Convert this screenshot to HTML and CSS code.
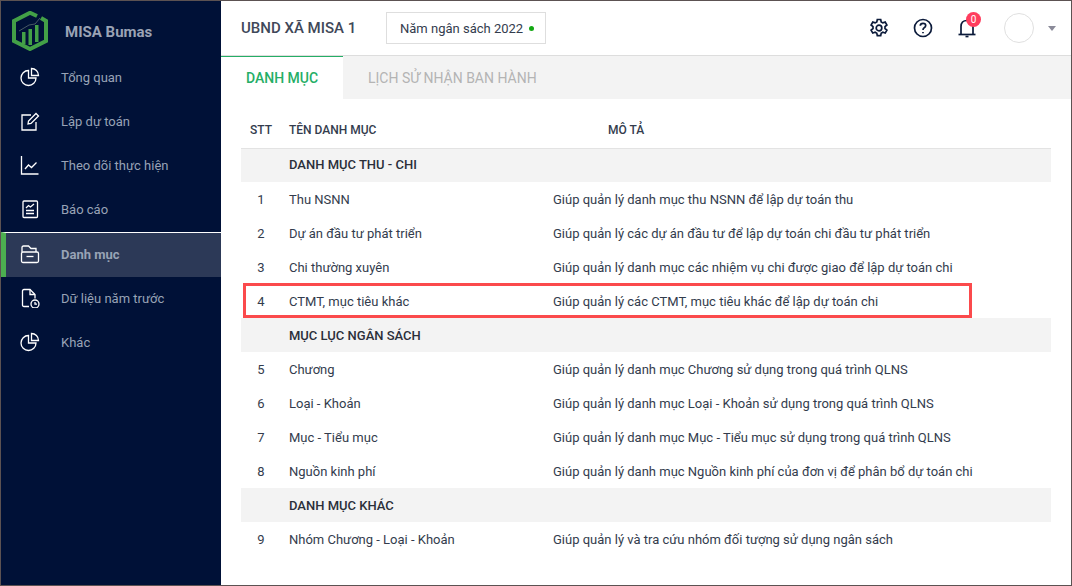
FILE: index.html
```html
<!DOCTYPE html>
<html lang="vi">
<head>
    <meta charset="UTF-8">
    <meta name="viewport" content="width=device-width, initial-scale=1.0">
    <title>MISA Bumas</title>
    <link rel="stylesheet" href="styles.css">
</head>
<body>
    <div class="window">
        <aside class="sidebar">
            <div class="brand">
                <svg class="logo" width="36" height="40" viewBox="0 0 36 40" fill="none">
                    <path d="M25 5 18 1.800 2 10V30L18 38 34 30V10L29 7" stroke="#43a047" stroke-width="4"/>
                    <path d="M10 21h3.500v12H10zM16.500 18H20v16h-3.500zM23 14h3.500v17H23z" fill="#43a047"/>
                    <path d="M7 20 17 14l6-1 5-6" stroke="#5a6b70" stroke-width="0.800"/>
                </svg>
                <span class="brand-name">MISA Bumas</span>
            </div>
            <nav class="menu">
                <a class="menu-item">
                    <svg class="menu-icon" viewBox="0 0 20 20"><path d="M8.500 3.500a7.500 7.500 0 1 0 7.500 7.500H8.500z"/><path d="M11.500 1.500a7 7 0 0 1 7 7h-7z"/></svg>
                    Tổng quan
                </a>
                <a class="menu-item">
                    <svg class="menu-icon" viewBox="0 0 20 20"><path d="M11 4H2v15h14v-8"/><path d="M8 13l.5-3L16 2.500 18.500 5 11 12.500z"/></svg>
                    Lập dự toán
                </a>
                <a class="menu-item">
                    <svg class="menu-icon" viewBox="0 0 20 20"><path d="M1.500 1v18h17"/><path d="M5 14l3.500-4 3 2.500 5-5"/></svg>
                    Theo dõi thực hiện
                </a>
                <a class="menu-item">
                    <svg class="menu-icon" viewBox="0 0 20 20"><rect x="3" y="2" width="14.500" height="16.500" rx="1"/><path d="M6 9l2.500-2.500 2 1.500 3.500-3M6 11.500h8M6 14.500h8"/></svg>
                    Báo cáo
                </a>
                <a class="menu-item active">
                    <svg class="menu-icon" viewBox="0 0 20 20"><path d="M2 8V3.500Q2 2 3.500 2h5L11 4.500h5V8"/><rect x="1.500" y="8" width="17" height="10.500" rx="1.500"/><path d="M6.500 12.500h7"/></svg>
                    Danh mục
                </a>
                <a class="menu-item">
                    <svg class="menu-icon" viewBox="0 0 20 20"><path d="M9 18.500H4Q2.500 18.500 2.500 17V3Q2.500 1.500 4 1.500h6l5 5v4"/><path d="M10 1.500v5h5"/><circle cx="15" cy="16" r="4"/><path d="M15 14v2.200h2"/></svg>
                    Dữ liệu năm trước
                </a>
                <a class="menu-item">
                    <svg class="menu-icon" viewBox="0 0 20 20"><path d="M8.500 3.500a7.500 7.500 0 1 0 7.500 7.500H8.500z"/><path d="M11.500 1.500a7 7 0 0 1 7 7h-7z"/></svg>
                    Khác
                </a>
            </nav>
        </aside>

        <main class="main">
            <header class="topbar">
                <div class="org-name">UBND XÃ MISA 1</div>
                <div class="budget-year">Năm ngân sách 2022<span class="dot"></span></div>
                <div class="topbar-right">
                    <svg class="top-icon" viewBox="0 0 20 20"><path d="M8.300 1.500h3.400l.5 2.500 1.600.9 2.400-.8 1.700 2.900-1.900 1.700v1.800l1.900 1.700-1.700 2.900-2.400-.8-1.600.9-.5 2.500H8.300l-.5-2.500-1.600-.9-2.400.8-1.700-2.900 1.900-1.700V8.700L2.100 7l1.700-2.900 2.400.8 1.600-.9z"/><circle cx="10" cy="10" r="2.800"/></svg>
                    <svg class="top-icon" viewBox="0 0 20 20"><circle cx="10" cy="10" r="8.500"/><path d="M7.300 7.800Q7.300 5.300 10 5.300T12.700 7.600Q12.700 9 11.200 9.800 10 10.500 10 12"/><path d="M10 14v1.300"/></svg>
                    <div class="bell">
                        <svg class="top-icon" viewBox="0 0 20 20"><path d="M1.500 16.500h17"/><path d="M4 16.500V8.500Q4 2.500 10 2.500T16 8.500v8"/><path d="M8.500 18.500h3"/></svg>
                        <span class="badge">0</span>
                    </div>
                    <div class="avatar"></div>
                    <span class="caret"></span>
                </div>
            </header>

            <div class="tabs">
                <div class="tab active">DANH MỤC</div>
                <div class="tab">LỊCH SỬ NHẬN BAN HÀNH</div>
            </div>

            <div class="content">
                <table class="list">
                    <thead>
                        <tr>
                            <th class="col-stt">STT</th>
                            <th class="col-name">TÊN DANH MỤC</th>
                            <th class="col-desc">MÔ TẢ</th>
                        </tr>
                    </thead>
                    <tbody>
                        <tr class="group first"><td></td><td colspan="2">DANH MỤC THU - CHI</td></tr>
                        <tr><td class="num">1</td><td>Thu NSNN</td><td>Giúp quản lý danh mục thu NSNN để lập dự toán thu</td></tr>
                        <tr><td class="num">2</td><td>Dự án đầu tư phát triển</td><td>Giúp quản lý các dự án đầu tư để lập dự toán chi đầu tư phát triển</td></tr>
                        <tr><td class="num">3</td><td>Chi thường xuyên</td><td>Giúp quản lý danh mục các nhiệm vụ chi được giao để lập dự toán chi</td></tr>
                        <tr><td class="num">4</td><td>CTMT, mục tiêu khác</td><td>Giúp quản lý các CTMT, mục tiêu khác để lập dự toán chi</td></tr>
                        <tr class="group"><td></td><td colspan="2">MỤC LỤC NGÂN SÁCH</td></tr>
                        <tr><td class="num">5</td><td>Chương</td><td>Giúp quản lý danh mục Chương sử dụng trong quá trình QLNS</td></tr>
                        <tr><td class="num">6</td><td>Loại - Khoản</td><td>Giúp quản lý danh mục Loại - Khoản sử dụng trong quá trình QLNS</td></tr>
                        <tr><td class="num">7</td><td>Mục - Tiểu mục</td><td>Giúp quản lý danh mục Mục - Tiểu mục sử dụng trong quá trình QLNS</td></tr>
                        <tr><td class="num">8</td><td>Nguồn kinh phí</td><td>Giúp quản lý danh mục Nguồn kinh phí của đơn vị để phân bổ dự toán chi</td></tr>
                        <tr class="group"><td></td><td colspan="2">DANH MỤC KHÁC</td></tr>
                        <tr><td class="num">9</td><td>Nhóm Chương - Loại - Khoản</td><td>Giúp quản lý và tra cứu nhóm đối tượng sử dụng ngân sách</td></tr>
                    </tbody>
                </table>
                <div class="highlight"></div>
            </div>
        </main>
    </div>
</body>
</html>
```

FILE: styles.css
```css
* {
    box-sizing: border-box;
}

body {
    margin: 0;
    font-family: 'Roboto', 'Liberation Sans', sans-serif;
    font-size: 13px;
    color: #333c4d;
    background-color: #fff;
}

.window {
    display: flex;
    width: 1072px;
    height: 586px;
    border: 1px solid #5c5252;
    overflow: hidden;
}

/* sidebar */
.sidebar {
    flex: 0 0 220px;
    background-color: #001137;
}

.brand {
    display: flex;
    align-items: center;
    height: 54px;
    padding-left: 11px;
}

.logo {
    margin-top: 6px;
}

.brand-name {
    margin-left: 17px;
    margin-top: 8px;
    font-size: 15px;
    font-weight: 700;
    color: #9aa3b5;
}

.menu-item {
    display: flex;
    align-items: center;
    height: 44px;
    padding-left: 19px;
    color: #98a3b6;
    font-size: 13px;
}

.menu-item.active {
    height: 45px;
    margin-top: 1px;
    margin-bottom: -1px;
    border-top: 1px solid #fff;
    border-left: 5px solid #4caf50;
    padding-left: 14px;
    padding-bottom: 2px;
    background-color: #2c3957;
    font-weight: 700;
}

.menu-icon {
    width: 20px;
    height: 20px;
    margin-right: 21px;
    fill: none;
    stroke: #fff;
    stroke-width: 1.300;
}

/* header */
.main {
    flex: 1;
    display: flex;
    flex-direction: column;
    min-width: 0;
}

.topbar {
    display: flex;
    align-items: center;
    height: 55px;
    padding: 0 15px 0 20px;
    border-bottom: 1px solid #ddd;
}

.org-name {
    width: 145px;
    font-size: 15px;
    font-weight: 500;
    color: #3f4859;
}

.budget-year {
    display: flex;
    align-items: center;
    width: 160px;
    height: 32px;
    padding-left: 13px;
    border: 1px solid #dedede;
    color: #333c4d;
}

.dot {
    width: 5px;
    height: 5px;
    margin-left: 6px;
    border-radius: 50%;
    background-color: #13a813;
}

.topbar-right {
    display: flex;
    align-items: center;
    margin-left: auto;
}

.top-icon {
    display: block;
    width: 20px;
    height: 20px;
    margin-right: 24px;
    fill: none;
    stroke: #0b1a3a;
    stroke-width: 1.700;
}

.bell {
    position: relative;
}

.badge {
    position: absolute;
    top: -6px;
    left: 9px;
    width: 15px;
    height: 15px;
    border-radius: 50%;
    background-color: #ff3d5e;
    color: #fff;
    font-size: 10px;
    line-height: 15px;
    text-align: center;
}

.avatar {
    width: 30px;
    height: 30px;
    margin-left: 3px;
    border: 1px solid #e0e0e0;
    border-radius: 50%;
}

.caret {
    margin-left: 14px;
    border-left: 4px solid transparent;
    border-right: 4px solid transparent;
    border-top: 5px solid #8a8a99;
}

/* tabs */
.tabs {
    display: flex;
    height: 43px;
    background-color: #f3f3f3;
    font-size: 14px;
}

.tab {
    display: flex;
    align-items: center;
    padding: 0 25px;
    color: #b4b4b4;
    white-space: nowrap;
}

.tab.active {
    width: 122px;
    border-top: 1px solid #25ae66;
    background-color: #fff;
    color: #25ae66;
    font-weight: 500;
}

/* table */
.content {
    position: relative;
    flex: 1;
    padding: 11px 20px 0;
}

.list {
    width: 810px;
    border-collapse: collapse;
    table-layout: fixed;
}

.list th {
    height: 38px;
    padding: 2px 0 0 8px;
    border-bottom: 1px solid #e3e3e3;
    font-size: 12px;
    font-weight: 500;
    text-align: left;
    color: #333c4d;
}

.list th.col-stt {
    width: 40px;
    padding: 2px 0 0;
    text-align: center;
}

.list th.col-name {
    width: 264px;
}

.list th.col-desc {
    padding-left: 63px;
}

.list td {
    height: 34px;
    padding: 0 0 0 8px;
    white-space: nowrap;
}

.list td.num {
    padding: 0;
    text-align: center;
}

.group td {
    background-color: #f3f3f3;
    font-size: 13px;
    font-weight: 500;
    color: #2b2f3a;
}

.group.first td {
    padding-bottom: 2px;
}

/* red mark over row 4 */
.highlight {
    position: absolute;
    top: 184px;
    left: 22px;
    width: 729px;
    height: 35px;
    border: 3px solid #fb4a4c;
}
```
